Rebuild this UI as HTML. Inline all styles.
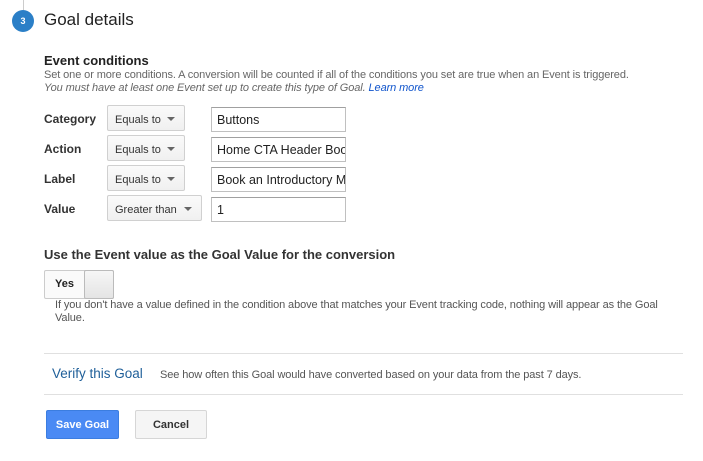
<!DOCTYPE html>
<html><head><meta charset="utf-8"><style>
body{margin:0;width:703px;height:461px;background:#fff;font-family:"Liberation Sans",Arial,sans-serif;color:#222;position:relative;overflow:hidden}
.a{position:absolute;white-space:nowrap}
.sel{position:absolute;height:26px;border:1px solid #d0d0d0;border-radius:2px;background:linear-gradient(#fafafa,#f0f0f0);font-size:11px;color:#333;box-sizing:border-box;padding:8px 0 0 7px}
.sel:after{content:"";position:absolute;right:9px;top:11px;border:4px solid transparent;border-top:4px solid #666}
.inp{position:absolute;left:211px;width:135px;height:25px;border:1px solid #c0c0c0;border-top-color:#a0a0a0;box-sizing:border-box;font-size:12.5px;padding:5px 0 0 5px;overflow:hidden;white-space:nowrap}
.lbl{position:absolute;left:44px;font-size:12px;font-weight:bold;color:#333}
.btn{position:absolute;top:410px;height:29px;border-radius:2px;box-sizing:border-box;font-size:11px;font-weight:bold;text-align:center;line-height:28px}
</style></head><body>
<div class="a" style="left:23px;top:0;width:1px;height:10px;background:#ccc"></div>
<div class="a" style="left:12px;top:10px;width:22px;height:22px;border-radius:50%;background:#2b7fc7;color:#fff;font-size:9px;font-weight:bold;text-align:center;line-height:22px">3</div>
<div class="a" style="left:44px;top:10px;font-size:17px;color:#222">Goal details</div>
<div class="a" style="left:44px;top:53px;font-size:13px;font-weight:bold">Event conditions</div>
<div class="a" style="left:44px;top:69px;font-size:11px;color:#666;letter-spacing:-0.1px">Set one or more conditions. A conversion will be counted if all of the conditions you set are true when an Event is triggered.</div>
<div class="a" style="left:44px;top:82px;font-size:11px;color:#666;font-style:italic;letter-spacing:-0.1px">You must have at least one Event set up to create this type of Goal. <span style="color:#15c">Learn more</span></div>

<div class="lbl" style="top:112px">Category</div>
<div class="sel" style="left:107px;top:105px;width:78px">Equals to</div>
<div class="inp" style="top:107px">Buttons</div>
<div class="lbl" style="top:142px">Action</div>
<div class="sel" style="left:107px;top:135px;width:78px">Equals to</div>
<div class="inp" style="top:137px">Home CTA Header Book</div>
<div class="lbl" style="top:172px">Label</div>
<div class="sel" style="left:107px;top:165px;width:78px">Equals to</div>
<div class="inp" style="top:167px">Book an Introductory Meeting</div>
<div class="lbl" style="top:202px">Value</div>
<div class="sel" style="left:107px;top:195px;width:95px">Greater than</div>
<div class="inp" style="top:197px">1</div>

<div class="a" style="left:44px;top:247px;font-size:13px;font-weight:bold;color:#333">Use the Event value as the Goal Value for the conversion</div>
<div class="a" style="left:44px;top:270px;width:70px;height:29px;border:1px solid #ccc;border-radius:2px;box-sizing:border-box;background:#fafafa"></div>
<div class="a" style="left:55px;top:278px;font-size:11px;font-weight:bold">Yes</div>
<div class="a" style="left:84px;top:270px;width:30px;height:29px;border:1px solid #bbb;border-radius:2px;box-sizing:border-box;background:linear-gradient(#f6f6f6,#e4e4e4)"></div>
<div class="a" style="left:55px;top:299px;font-size:11px;color:#555;line-height:13px;letter-spacing:-0.1px">If you don't have a value defined in the condition above that matches your Event tracking code, nothing will appear as the Goal<br>Value.</div>

<div class="a" style="left:44px;top:353px;width:639px;height:1px;background:#e0e0e0"></div>
<div class="a" style="left:52px;top:366px;font-size:13.5px;color:#1f5f99">Verify this Goal</div>
<div class="a" style="left:160px;top:369px;font-size:11px;color:#555;letter-spacing:-0.1px">See how often this Goal would have converted based on your data from the past 7 days.</div>
<div class="a" style="left:44px;top:394px;width:639px;height:1px;background:#e0e0e0"></div>

<div class="btn" style="left:46px;width:73px;background:#4a8af4;border:1px solid #3b7de0;color:#fff">Save Goal</div>
<div class="btn" style="left:135px;width:72px;background:#f5f5f5;border:1px solid #d6d6d6;color:#333">Cancel</div>
</body></html>
